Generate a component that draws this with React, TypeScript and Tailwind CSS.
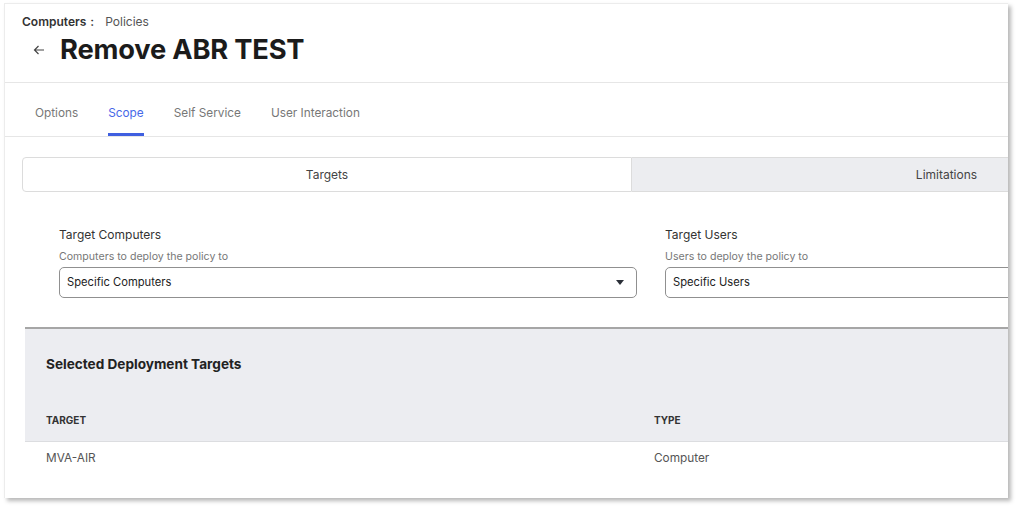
import React, { useState } from "react";

type Tab = "options" | "scope" | "selfService" | "userInteraction";

const tabs: { id: Tab; label: string }[] = [
  { id: "options", label: "Options" },
  { id: "scope", label: "Scope" },
  { id: "selfService", label: "Self Service" },
  { id: "userInteraction", label: "User Interaction" },
];

const targets = [{ name: "MVA-AIR", type: "Computer" }];

const Caret: React.FC = () => (
  <svg width="8" height="5" viewBox="0 0 8 5" className="shrink-0">
    <path d="M0 0 L8 0 L4 5 Z" fill="#2b2f38" />
  </svg>
);

const SelectBox: React.FC<{ value: string; caret?: boolean }> = ({ value, caret }) => (
  <div className="h-[31px] flex items-center justify-between pl-[7px] pr-[12px] border border-[#909090] rounded-[5px] bg-white text-[11.2px] text-[#222]">
    <span>{value}</span>
    {caret && <Caret />}
  </div>
);

export default function App() {
  const [tab, setTab] = useState<Tab>("scope");
  const [scopeTab, setScopeTab] = useState<"targets" | "limitations">("targets");

  return (
    <div className="w-[1016px] h-[506px] bg-white pt-[3px] pl-[4px] font-['Inter',sans-serif]">
      <div className="w-[1004px] h-[495px] overflow-hidden bg-white border-l border-t border-[#ececec] shadow-[3px_3px_4px_rgba(0,0,0,0.28)]">
        <div className="w-[1270px]">
          {/* Header */}
          <div className="pt-[10px] pb-[14px] pl-[17px] border-b border-[#e6e6e6]">
            <div className="flex items-center text-[12px] leading-[16px]">
              <span className="font-semibold text-[#333]">Computers</span>
              <span className="font-semibold text-[#333] ml-[4px]">:</span>
              <span className="text-[#555] ml-[11px]">Policies</span>
            </div>
            <div className="flex items-center mt-[2px]">
              <button className="w-[14px] ml-[10px] mr-[14px] flex items-center justify-center text-[#444]">
                <svg width="12" height="10" viewBox="0 0 12 10" fill="none" stroke="currentColor" strokeWidth="1.2">
                  <path d="M11 5 H1.5 M5.5 1 L1.5 5 L5.5 9" />
                </svg>
              </button>
              <h1 className="text-[27.3px] leading-[36px] font-bold text-[#1b1b1b] tracking-[-0.2px]">Remove ABR TEST</h1>
            </div>
          </div>

          {/* Tabs */}
          <div className="flex gap-[30px] pl-[30px] border-b border-[#e6e6e6]">
            {tabs.map((t) => (
              <button
                key={t.id}
                onClick={() => setTab(t.id)}
                className={`pt-[20px] pb-[10px] text-[11.8px] leading-[20px] border-b-[3px] ${
                  tab === t.id ? "text-[#4668e8] border-[#3f5fe0]" : "text-[#777] border-transparent"
                }`}
              >
                {t.label}
              </button>
            ))}
          </div>

          {/* Targets / Limitations switch */}
          <div className="flex mt-[20px] ml-[17px] text-[12px] leading-[16px]">
            <button
              onClick={() => setScopeTab("targets")}
              className={`w-[610px] h-[35px] border border-[#dcdcdc] rounded-l-[4px] ${
                scopeTab === "targets" ? "bg-white text-[#444]" : "bg-[#ecedf0] text-[#444]"
              }`}
            >
              Targets
            </button>
            <button
              onClick={() => setScopeTab("limitations")}
              className={`w-[630px] h-[35px] border border-l-0 border-[#dcdcdc] ${
                scopeTab === "limitations" ? "bg-white text-[#444]" : "bg-[#ecedf0] text-[#444]"
              }`}
            >
              Limitations
            </button>
          </div>

          {/* Target selects */}
          <div className="grid grid-cols-[578px_578px] gap-[28px] ml-[54px] mt-[34px]">
            <div>
              <div className="text-[12px] leading-[18px] text-[#333]">Target Computers</div>
              <div className="text-[10.6px] leading-[14px] text-[#777] mt-[6px]">Computers to deploy the policy to</div>
              <div className="mt-[3px]">
                <SelectBox value="Specific Computers" caret />
              </div>
            </div>
            <div>
              <div className="text-[12px] leading-[18px] text-[#333]">Target Users</div>
              <div className="text-[10.6px] leading-[14px] text-[#777] mt-[6px]">Users to deploy the policy to</div>
              <div className="mt-[3px]">
                <SelectBox value="Specific Users" caret />
              </div>
            </div>
          </div>

          {/* Selected targets table */}
          <div className="ml-[20px] mt-[29px] border-t-2 border-[#a6a6a6]">
            <div className="bg-[#ecedf1]">
              <h2 className="pl-[21px] pt-[26px] text-[13.6px] leading-[18px] font-bold text-[#222]">
                Selected Deployment Targets
              </h2>
              <div className="grid grid-cols-[608px_1fr] pl-[21px] pt-[39px] pb-[13px] text-[10px] leading-[16px] font-bold text-[#333]">
                <span>TARGET</span>
                <span>TYPE</span>
              </div>
            </div>
            <div className="border-t border-[#dcdde0]">
              {targets.map((row) => (
                <div
                  key={row.name}
                  className="grid grid-cols-[608px_1fr] pl-[21px] h-[34px] items-center text-[11.8px] text-[#555]"
                >
                  <span>{row.name}</span>
                  <span>{row.type}</span>
                </div>
              ))}
            </div>
          </div>
        </div>
      </div>
    </div>
  );
}
